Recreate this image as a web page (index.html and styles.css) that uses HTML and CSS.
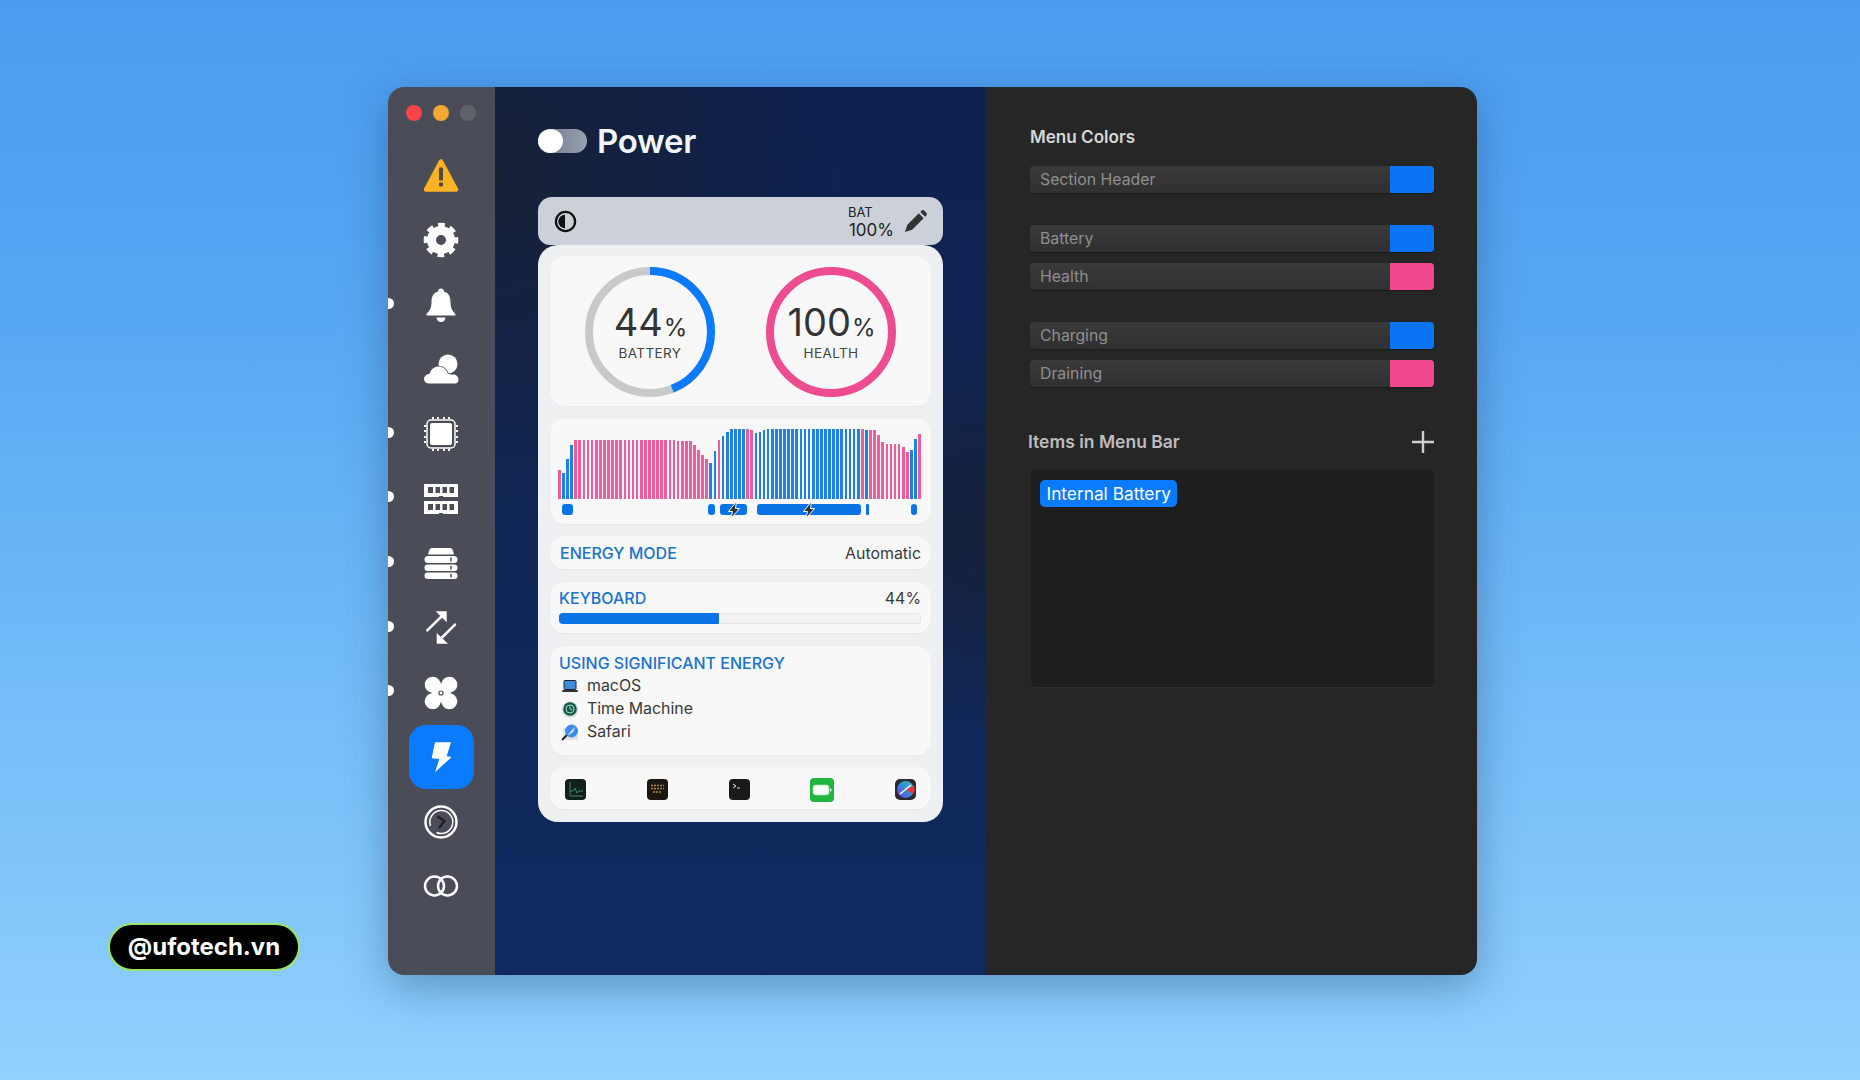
FILE: index.html
```html
<!DOCTYPE html>
<html lang="en">
<head>
<meta charset="utf-8">
<title>Power</title>
<link rel="stylesheet" href="styles.css">
</head>
<body>
<main class="window">
  <nav class="sidebar">
    <div class="lights"><span class="light red"></span><span class="light amber"></span><span class="light grey"></span></div>
    <div class="nav-list">
      <div class="nav-item"><svg class="nav-icon" viewBox="0 0 36 36"><path d="M18 3.500 L33 31.500 H3 Z" fill="#fbb224" stroke="#fbb224" stroke-width="4.500" stroke-linejoin="round"/><rect x="16" y="9.500" width="4" height="13" rx="1" fill="#4d4a45"/><rect x="16" y="24.500" width="4" height="4" rx="1" fill="#4d4a45"/></svg></div>
      <div class="nav-item"><svg class="nav-icon" viewBox="0 0 36 36"><circle cx="18" cy="18" r="9.500" fill="none" stroke="#fff" stroke-width="9"/><circle cx="18" cy="18" r="14.800" fill="none" stroke="#fff" stroke-width="5" stroke-dasharray="6.500 5.125" stroke-dashoffset="3.250"/></svg></div>
      <div class="nav-item"><span class="dot"></span><svg class="nav-icon" viewBox="0 0 36 36"><path d="M18 1.500 C20 1.500 21 3 21 4.500 C26 6 27.500 10 27.500 15 C27.500 21 29.500 24 32.500 27 V28.500 H3.500 V27 C6.500 24 8.500 21 8.500 15 C8.500 10 10 6 15 4.500 C15 3 16 1.500 18 1.500 Z" fill="#fff"/><path d="M13.500 30.500 H22.500 C22.500 33 20.500 35 18 35 C15.500 35 13.500 33 13.500 30.500 Z" fill="#fff"/></svg></div>
      <div class="nav-item"><svg class="nav-icon" viewBox="0 0 36 36"><circle cx="25" cy="12" r="9.500" fill="#fff"/><path d="M6 31.500 H32 C34.500 31.500 35.500 29.500 35.500 27.500 C35.500 24.500 33 22.500 30 22.500 C28 22.500 26 22.500 24.500 21 C23 17 20 14.500 15.500 14.500 C12 14.500 8 16.500 6.500 22 C4 22 1 24 1 27 C1 29.500 3 31.500 6 31.500 Z" fill="#fff" stroke="#4a4d57" stroke-width="1.500" paint-order="stroke"/></svg></div>
      <div class="nav-item"><span class="dot"></span><svg class="nav-icon" viewBox="0 0 36 36"><rect x="4" y="4" width="28" height="28" rx="4" fill="none" stroke="#fff" stroke-width="1.500"/><rect x="7" y="7" width="22" height="22" rx="2" fill="#fff"/><path d="M10 1 V3 M15 1 V3 M21 1 V3 M26 1 V3 M10 33 V35 M15 33 V35 M21 33 V35 M26 33 V35 M1 10 H3 M1 15 H3 M1 21 H3 M1 26 H3 M33 10 H35 M33 15 H35 M33 21 H35 M33 26 H35" stroke="#fff" stroke-width="2"/></svg></div>
      <div class="nav-item"><span class="dot"></span><svg class="nav-icon" viewBox="0 0 36 36"><path d="M1 3 H35 V16 H20 V15 H16 V16 H1 Z M1 20 H35 V33 H20 V32 H16 V33 H1 Z" fill="#fff"/><path d="M5 6 H10 V12 H5 Z M12.500 6 H17 V12 H12.500 Z M19.500 6 H24 V12 H19.500 Z M26.500 6 H31 V12 H26.500 Z M5 23 H10 V29 H5 Z M12.500 23 H17 V29 H12.500 Z M19.500 23 H24 V29 H19.500 Z M26.500 23 H31 V29 H26.500 Z" fill="#4a4d57"/></svg></div>
      <div class="nav-item"><span class="dot"></span><svg class="nav-icon" viewBox="0 0 36 36"><path d="M9 3 H27 C29 3 30 5 31 9.500 H5 C6 5 7 3 9 3 Z" fill="#fff"/><rect x="1.500" y="11" width="33" height="7" rx="3.500" fill="#fff"/><rect x="1.500" y="19.500" width="33" height="6.500" rx="3.250" fill="#fff"/><rect x="1.500" y="27.500" width="33" height="6.500" rx="3.250" fill="#fff"/><path d="M28 12.500 V16.500 M28 21 V24.500 M28 29 V32.500" stroke="#4a4d57" stroke-width="1.500"/></svg></div>
      <div class="nav-item"><span class="dot"></span><svg class="nav-icon" viewBox="0 0 36 36"><path d="M12.700 1.300 H23.700 V12.300 Z M13.700 33.700 V23 L25 33.700 Z" fill="#fff"/><path d="M4.300 20.300 L19 6 M32 14.700 L17.500 29" stroke="#fff" stroke-width="2.500" stroke-linecap="round"/></svg></div>
      <div class="nav-item"><span class="dot"></span><svg class="nav-icon" viewBox="0 0 36 36"><g fill="#fff"><circle cx="9.700" cy="9.700" r="8"/><circle cx="26.300" cy="9.700" r="8"/><circle cx="26.300" cy="26.300" r="8"/><circle cx="9.700" cy="26.300" r="8"/><path d="M18 8 L28 18 L18 28 L8 18 Z"/></g><circle cx="18" cy="18" r="2" fill="#fff" stroke="#4a4d57" stroke-width="1.200"/></svg></div>
      <div class="nav-item active"><svg class="nav-icon" viewBox="0 0 36 36"><path d="M12 3.300 H28 L23.700 17.300 L28.700 18 L12 33.300 L16.300 20 L8.700 19.300 Z" fill="#fff"/></svg></div>
      <div class="nav-item"><svg class="nav-icon" viewBox="0 0 36 36"><circle cx="18" cy="18" r="15.500" fill="#4a4d57" stroke="#fff" stroke-width="2.500"/><path d="M7.500 22 A11.500 11.500 0 1 1 13.500 28.500" fill="none" stroke="#fff" stroke-width="1.500"/><path d="M14.500 12.500 L21.500 17 L16 24" fill="none" stroke="#1e1e20" stroke-width="2.200"/></svg></div>
      <div class="nav-item"><svg class="nav-icon" viewBox="0 0 36 36"><circle cx="11.500" cy="18" r="9.500" fill="none" stroke="#fff" stroke-width="2.500"/><circle cx="24.500" cy="18" r="9.500" fill="none" stroke="#fff" stroke-width="2.500"/></svg></div>
    </div>
  </nav>

  <section class="preview">
    <header class="title-row">
      <span class="toggle"><span class="knob"></span></span>
      <h1 class="title">Power</h1>
    </header>
    <div class="widget-head">
      <svg class="mode-icon" viewBox="0 0 24 24"><circle cx="12" cy="12" r="10" fill="none" stroke="#111" stroke-width="2.400"/><path d="M11.500 5 A7 7 0 0 0 11.500 19 Z" fill="#111"/></svg>
      <div class="bat"><span class="bat-label">BAT</span><span class="bat-value">100%</span></div>
      <svg class="pencil" viewBox="0 0 24 24"><path d="M1 23 L3.500 15.500 L15.500 3.500 L20.500 8.500 L8.500 20.500 Z M17 2 L18.500 0.500 C19.500 -0.200 20.500 0 21 0.500 L23.500 3 C24 3.500 24 4.500 23.500 5.500 L22 7 Z" fill="#333"/></svg>
    </div>
    <div class="widget">
      <div class="card rings">
        <div class="ring">
          <svg class="ring-svg" viewBox="0 0 130 130"><circle cx="65" cy="65" r="61" fill="none" stroke="#c9c9c9" stroke-width="8"/><circle cx="65" cy="65" r="61" fill="none" stroke="#0a7aff" stroke-width="8" stroke-dasharray="168.600 400" transform="rotate(-90 65 65)"/></svg>
          <div class="ring-text"><div class="ring-value">44<small>%</small></div><div class="ring-label">BATTERY</div></div>
        </div>
        <div class="ring">
          <svg class="ring-svg" viewBox="0 0 130 130"><circle cx="65" cy="65" r="61" fill="none" stroke="#ee4c90" stroke-width="8"/></svg>
          <div class="ring-text"><div class="ring-value">100<small>%</small></div><div class="ring-label">HEALTH</div></div>
        </div>
      </div>

      <div class="card history">
        <div class="bars">
          <span class="p" style="height:28.7px"></span><span class="b" style="height:26px"></span><span class="b" style="height:39.7px"></span><span class="b" style="height:53.7px"></span>
          <span class="p" style="height:58.7px"></span><span class="p" style="height:58.7px"></span><span class="p" style="height:58.7px"></span><span class="p" style="height:58.7px"></span><span class="p" style="height:58.7px"></span>
          <span class="p" style="height:58.7px"></span><span class="p" style="height:58.7px"></span><span class="p" style="height:58.7px"></span><span class="p" style="height:58.7px"></span><span class="p" style="height:58.7px"></span>
          <span class="p" style="height:58.7px"></span><span class="p" style="height:58.7px"></span><span class="p" style="height:58.7px"></span><span class="p" style="height:58.7px"></span><span class="p" style="height:58.7px"></span>
          <span class="p" style="height:58.7px"></span><span class="p" style="height:58.7px"></span><span class="p" style="height:58.7px"></span><span class="p" style="height:58.7px"></span><span class="p" style="height:58.7px"></span>
          <span class="p" style="height:58.7px"></span><span class="p" style="height:58.7px"></span><span class="p" style="height:58.7px"></span><span class="p" style="height:58.7px"></span><span class="p" style="height:58.7px"></span>
          <span class="p" style="height:58px"></span><span class="p" style="height:58px"></span><span class="p" style="height:58px"></span><span class="p" style="height:58px"></span>
          <span class="p" style="height:54px"></span><span class="p" style="height:49px"></span><span class="p" style="height:44.3px"></span><span class="p" style="height:39.7px"></span>
          <span class="b" style="height:36.3px"></span><span class="b" style="height:48px"></span><span class="p" style="height:58.7px"></span><span class="b" style="height:62.7px"></span><span class="b" style="height:66.7px"></span>
          <span class="b" style="height:69.7px"></span><span class="b" style="height:69.7px"></span><span class="b" style="height:69.7px"></span><span class="b" style="height:69.7px"></span>
          <span class="p" style="height:69.7px"></span><span class="p" style="height:68.7px"></span>
          <span class="b" style="height:66px"></span><span class="b" style="height:67.3px"></span><span class="b" style="height:68.7px"></span>
          <span class="b" style="height:69.7px"></span><span class="b" style="height:69.7px"></span><span class="b" style="height:69.7px"></span><span class="b" style="height:69.7px"></span><span class="b" style="height:69.7px"></span>
          <span class="b" style="height:69.7px"></span><span class="b" style="height:69.7px"></span><span class="b" style="height:69.7px"></span><span class="b" style="height:69.7px"></span><span class="b" style="height:69.7px"></span>
          <span class="b" style="height:69.7px"></span><span class="b" style="height:69.7px"></span><span class="b" style="height:69.7px"></span><span class="b" style="height:69.7px"></span><span class="b" style="height:69.7px"></span>
          <span class="b" style="height:69.7px"></span><span class="b" style="height:69.7px"></span><span class="b" style="height:69.7px"></span><span class="b" style="height:69.7px"></span><span class="b" style="height:69.7px"></span>
          <span class="b" style="height:69.7px"></span><span class="b" style="height:69.7px"></span><span class="b" style="height:69.7px"></span>
          <span class="p" style="height:69.7px"></span><span class="b" style="height:69.3px"></span><span class="p" style="height:68.7px"></span><span class="p" style="height:68.7px"></span>
          <span class="p" style="height:63.7px"></span><span class="p" style="height:57px"></span><span class="p" style="height:55.3px"></span><span class="p" style="height:54.7px"></span><span class="p" style="height:54.7px"></span><span class="p" style="height:54.7px"></span>
          <span class="p" style="height:52px"></span><span class="p" style="height:47px"></span><span class="b" style="height:48.7px"></span><span class="b" style="height:59.7px"></span><span class="p" style="height:64.7px"></span>
        </div>
        <div class="timeline">
          <span class="seg" style="margin-left:4px;width:11px"></span>
          <span class="seg" style="margin-left:135px;width:7px"></span>
          <span class="seg" style="margin-left:5px;width:27px"><svg class="bolt" viewBox="0 0 14 18"><path d="M9.500 0.500 L1.500 10.500 H5.500 L4 17.500 L12.500 7.500 H8.500 Z" fill="#333" stroke="#f8f8f9" stroke-width="1"/></svg></span>
          <span class="seg" style="margin-left:10px;width:104px"><svg class="bolt" viewBox="0 0 14 18"><path d="M9.500 0.500 L1.500 10.500 H5.500 L4 17.500 L12.500 7.500 H8.500 Z" fill="#333" stroke="#f8f8f9" stroke-width="1"/></svg></span>
          <span class="seg thin" style="margin-left:5px;width:3px"></span>
          <span class="seg" style="margin-left:42px;width:6px"></span>
        </div>
      </div>

      <div class="card mode">
        <span class="label">ENERGY MODE</span><span class="text">Automatic</span>
      </div>

      <div class="card keyboard">
        <div class="kb-row"><span class="label">KEYBOARD</span><span class="text">44%</span></div>
        <div class="meter"><span class="meter-fill"></span></div>
      </div>

      <div class="card energy">
        <div class="label">USING SIGNIFICANT ENERGY</div>
        <div class="app"><svg class="app-icon" viewBox="0 0 18 18"><rect x="3" y="3.500" width="12" height="9" rx="1" fill="#3f8bd9" stroke="#222" stroke-width="1"/><rect x="1" y="13" width="16" height="2" rx="1" fill="#333"/></svg><span class="text">macOS</span></div>
        <div class="app"><svg class="app-icon" viewBox="0 0 18 18"><circle cx="9" cy="9.500" r="8" fill="#d5d9d8"/><circle cx="9" cy="9" r="6.800" fill="#135a4a"/><circle cx="9" cy="9" r="4" fill="none" stroke="#9fe0c5" stroke-width="1"/><path d="M9 6.500 V9 L11 10" fill="none" stroke="#9fe0c5" stroke-width="1"/></svg><span class="text">Time Machine</span></div>
        <div class="app"><svg class="app-icon" viewBox="0 0 18 18"><rect x="2" y="5" width="15" height="12" rx="2" fill="#dfe1e4"/><circle cx="10.500" cy="8" r="6.500" fill="#3a8ee6"/><path d="M6 13 L11 7 L14 4 L12 9 Z" fill="#e9edf2"/><path d="M1 17 L6 12" stroke="#222" stroke-width="1.800"/></svg><span class="text">Safari</span></div>
      </div>

      <div class="card dock">
        <svg class="dock-icon" viewBox="0 0 21 21"><rect width="21" height="21" rx="4" fill="#12201c"/><path d="M5 3 V17 H18 M5 12 H8 L10 9 L12 14 L14 12 H18" fill="none" stroke="#3f8a6b" stroke-width="1"/></svg>
        <svg class="dock-icon" viewBox="0 0 21 21"><rect width="21" height="21" rx="4" fill="#1c1710"/><path d="M4 6.500 H17 M4 9.500 H17 M6 13 H15" stroke="#b08a2c" stroke-width="1.600" stroke-dasharray="2 1"/></svg>
        <svg class="dock-icon" viewBox="0 0 21 21"><rect width="21" height="21" rx="4" fill="#1a1a1a"/><path d="M4 5 L7 7 L4 9 M8 9 H11" fill="none" stroke="#ddd" stroke-width="1"/></svg>
        <svg class="dock-icon big" viewBox="0 0 24 24"><rect width="24" height="24" rx="4" fill="#20b53f"/><rect x="3.500" y="7.500" width="15" height="9" rx="2.500" fill="#fff" stroke="#d4f3db" stroke-width="1.500"/><path d="M20 10 L22 12 L20 14 Z" fill="#d4f3db"/></svg>
        <svg class="dock-icon" viewBox="0 0 21 21"><defs><linearGradient id="gauge" x1="0" y1="1" x2="1" y2="0"><stop offset="0" stop-color="#8a35c9"/><stop offset=".5" stop-color="#2f8be0"/><stop offset="1" stop-color="#34c5b0"/></linearGradient></defs><rect width="21" height="21" rx="5" fill="#2a2a30"/><circle cx="10.500" cy="10.500" r="8.500" fill="url(#gauge)"/><path d="M10.500 10.500 L19 6.500 A8.500 8.500 0 0 1 18 15 Z" fill="#e0383a"/><path d="M5 15 L16 6" stroke="#fff" stroke-width="1.500"/></svg>
      </div>
    </div>
  </section>

  <section class="settings">
    <h2 class="heading">Menu Colors</h2>
    <div class="color-row first"><span class="color-name">Section Header</span><span class="swatch blue"></span></div>
    <div class="color-row group"><span class="color-name">Battery</span><span class="swatch blue"></span></div>
    <div class="color-row"><span class="color-name">Health</span><span class="swatch pink"></span></div>
    <div class="color-row group"><span class="color-name">Charging</span><span class="swatch blue"></span></div>
    <div class="color-row"><span class="color-name">Draining</span><span class="swatch pink"></span></div>
    <div class="items-head">
      <h2 class="heading dim">Items in Menu Bar</h2>
      <svg class="plus" viewBox="0 0 22 22"><path d="M11 0 V22 M0 11 H22" stroke="#cfcfcf" stroke-width="2.400"/></svg>
    </div>
    <div class="items-list"><span class="chip">Internal Battery</span></div>
  </section>
</main>
<div class="watermark">@ufotech.vn</div>
</body>
</html>
```
FILE: styles.css
```css
* { box-sizing: border-box; }

html, body { height: 100%; }

body {
  margin: 0;
  height: 1080px;
  overflow: hidden;
  padding: 87px 0 0 388px;
  background: linear-gradient(180deg, #4a9cf0 0%, #57a8f3 30%, #78c0f9 70%, #90d1fd 100%);
  font-family: Inter, "Noto Sans", sans-serif;
  color: #333;
}

.window {
  display: flex;
  width: 1089px;
  height: 888px;
  border-radius: 16px;
  overflow: hidden;
  box-shadow: 0 12px 44px rgba(30, 65, 110, .42);
}

/* Sidebar */
.sidebar {
  flex: none;
  width: 107px;
  background: #4a4d57;
  padding-top: 18px;
}

.lights {
  display: flex;
  gap: 11px;
  padding-left: 18px;
  height: 16px;
}

.light { width: 16px; height: 16px; border-radius: 50%; }
.red { background: #fb4549; }
.amber { background: #f5a933; }
.grey { background: #5f616b; }

.nav-list {
  display: flex;
  flex-direction: column;
  margin-top: 22.500px;
}

.nav-item {
  position: relative;
  display: flex;
  align-items: center;
  justify-content: center;
  width: 65px;
  height: 64.600px;
  margin-left: 21px;
  border-radius: 17px;
}

.nav-item.active { background: #0a7aff; }

.nav-icon { width: 36px; height: 36px; display: block; margin-right: 1px; }

.dot {
  position: absolute;
  left: -26px;
  top: 25px;
  width: 11px;
  height: 11px;
  border-radius: 50%;
  background: #fff;
}

/* Middle panel */
.preview {
  flex: none;
  width: 491px;
  padding: 42px 43px 0;
  background:
    radial-gradient(circle at 100% 50%, rgba(24, 30, 48, .75) 0, rgba(24, 30, 48, 0) 32%),
    radial-gradient(circle at 0 10%, rgba(26, 32, 48, .8) 0, rgba(26, 32, 48, 0) 38%),
    linear-gradient(180deg, #0d2150 0%, #0f2656 50%, #102a60 100%);
}

.title-row {
  display: flex;
  align-items: center;
  height: 24px;
}

.toggle {
  display: block;
  width: 49px;
  height: 24px;
  border-radius: 12px;
  background: linear-gradient(90deg, #6e7688, #98a0b0);
}

.knob {
  display: block;
  width: 25px;
  height: 24px;
  border-radius: 50%;
  background: #fff;
}

.title {
  margin: 0 0 0 10px;
  font-size: 33px;
  font-weight: 600;
  line-height: 24px;
  letter-spacing: -.3px;
  color: #f2f6fb;
}

.widget-head {
  display: flex;
  align-items: center;
  height: 48px;
  margin-top: 44px;
  padding: 0 16px 0 16px;
  border-radius: 14px 14px 12px 12px;
  background: #cbd0d9;
}

.mode-icon { width: 23px; height: 23px; }

.bat {
  display: flex;
  flex-direction: column;
  margin-left: auto;
  color: #222;
}

.bat-label { font-size: 13px; line-height: 15px; margin-top: 3px; }
.bat-value { font-size: 17px; line-height: 20px; margin-left: 1px; }

.pencil { width: 23px; height: 23px; margin-left: 10px; }

.widget {
  display: flex;
  flex-direction: column;
  height: 577px;
  padding: 12px 13px;
  border-radius: 20px;
  background: #eeeff0;
}

.card {
  flex: none;
  border-radius: 13px;
  background: #f8f8f9;
  box-shadow: 0 1px 1px rgba(0, 0, 0, .05), 0 0 0 1px rgba(255, 255, 255, .35);
}

.rings {
  display: flex;
  height: 149px;
  padding: 10px 0 0 34px;
  gap: 51px;
}

.ring {
  display: grid;
  width: 130px;
  height: 130px;
}

.ring-svg, .ring-text { grid-area: 1 / 1; }
.ring-svg { width: 130px; height: 130px; }

.ring-text {
  display: flex;
  flex-direction: column;
  align-items: center;
  padding-top: 38px;
}

.ring-value {
  font-size: 38px;
  line-height: 35px;
  color: #333;
  white-space: nowrap;
  padding-left: 1px;
}

.ring-value small { font-size: 24px; margin-left: 1px; }

.ring-label {
  font-size: 13.500px;
  line-height: 16px;
  letter-spacing: .4px;
  color: #444;
}

.history {
  height: 105px;
  margin-top: 13px;
  padding: 8px 7px 0;
}

.bars {
  display: flex;
  align-items: flex-end;
  justify-content: space-between;
  width: 364px;
  height: 72px;
  transform: rotate(.005deg);
}

.bars span { flex: none; width: 2.700px; }
.bars .p { background: #ef5c9b; }
.bars .b { background: #1f80e8; }

.timeline {
  display: flex;
  width: 364px;
  height: 11px;
  margin-top: 5px;
}

.seg {
  display: flex;
  align-items: center;
  justify-content: center;
  flex: none;
  height: 11px;
  border-radius: 3px;
  background: #0a74e6;
}

.seg.thin { border-radius: 1px; }

.bolt { flex: none; width: 14px; height: 18px; }

.label { font-size: 16px; line-height: 20px; color: #1c72cf; font-weight: 500; }
.text { font-size: 15.900px; line-height: 20px; color: #3a3a3c; }

.mode {
  display: flex;
  align-items: center;
  justify-content: space-between;
  height: 32px;
  margin-top: 13px;
  padding: 0 9px;
}

.mode .text, .kb-row .text { padding-top: 1px; }

.keyboard {
  height: 50px;
  margin-top: 14px;
  padding: 5px 9px 0 8px;
}

.kb-row {
  display: flex;
  justify-content: space-between;
  height: 20px;
}

.meter {
  height: 11px;
  margin-top: 5px;
  border-radius: 4px;
  background: #f3f3f4;
  box-shadow: inset 0 0 0 1px #e5e5e6;
}

.meter-fill {
  display: block;
  width: 160px;
  height: 11px;
  border-radius: 4px 1px 1px 4px;
  background: #0a74e6;
}

.energy {
  height: 108px;
  margin-top: 14px;
  padding: 6px 8px 0;
}

.energy .label { margin-bottom: 1px; }

.app {
  display: flex;
  align-items: center;
  height: 23px;
  padding-left: 2px;
}

.app-icon { width: 18px; height: 18px; margin-right: 8px; }

.dock {
  display: flex;
  align-items: center;
  justify-content: space-between;
  height: 41px;
  margin-top: 13px;
  padding: 2px 14px 0;
}

.dock-icon { width: 21px; height: 21px; }
.dock-icon.big { width: 24px; height: 24px; }

/* Right panel */
.settings {
  flex: 1;
  padding: 40px 42px 0 44px;
  background: #262626;
}

.heading {
  margin: 0;
  font-size: 17.100px;
  font-weight: 600;
  line-height: 20px;
  color: #d6d6d6;
}

.heading.dim { color: #bdbdbd; }

.color-row {
  display: flex;
  width: 404px;
  height: 27px;
  margin-top: 11px;
  border-radius: 4px;
  overflow: hidden;
  background: linear-gradient(180deg, #3a3a3b, #303032);
  box-shadow: 0 1px 1px rgba(0, 0, 0, .3);
}

.color-row.first { margin-top: 19px; }
.color-row.group { margin-top: 32px; }

.color-name {
  flex: 1;
  padding-left: 10px;
  font-size: 15.800px;
  line-height: 27px;
  color: #8f8f8f;
}

.swatch { flex: none; width: 44px; }
.swatch.blue { background: #0a74f5; }
.swatch.pink { background: #f1488f; }

.items-head {
  display: flex;
  align-items: center;
  justify-content: space-between;
  width: 404px;
  height: 24px;
  margin: 43px 0 0 -2px;
}

.items-head .heading { font-size: 17.500px; }

.plus { width: 22px; height: 22px; margin-right: -2px; }

.items-list {
  width: 403px;
  height: 217px;
  margin: 16px 0 0 1px;
  padding: 10px 9px;
  border-radius: 4px;
  background: #1e1e1e;
  box-shadow: 0 1px 0 #2f2f2f;
}

.chip {
  display: inline-block;
  height: 27px;
  padding: 0 6.500px;
  border-radius: 5px;
  background: #0a7aff;
  font-size: 17.300px;
  line-height: 27px;
  color: #fff;
}

/* Overlay label */
.watermark {
  position: absolute;
  left: 108px;
  top: 923px;
  width: 192px;
  height: 48px;
  border: 2px solid #9be564;
  border-radius: 24px;
  background: #000;
  font-size: 24px;
  font-weight: 700;
  line-height: 44px;
  text-align: center;
  color: #fff;
}
```
